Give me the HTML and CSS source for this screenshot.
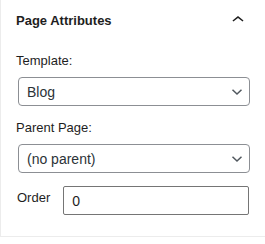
FILE: index.html
```html
<!DOCTYPE html>
<html lang="en">
<head>
	<meta charset="UTF-8">
	<title>Page Attributes</title>
	<link rel="stylesheet" href="styles.css">
</head>
<body>
	<div class="panel">
		<div class="panel-header">
			<h2 class="panel-title">Page Attributes</h2>
			<svg class="panel-toggle" width="24" height="24" viewBox="0 0 24 24" aria-hidden="true">
				<path d="M6.5 12.4L12 8l5.5 4.4-.9 1.2L12 10l-4.6 3.6-1-1.2z"></path>
			</svg>
		</div>
		<div class="field">
			<label class="field-label" for="template">Template:</label>
			<div class="select-wrap">
				<select id="template" class="field-select">
					<option>Blog</option>
				</select>
				<svg class="select-arrow" width="12" height="8" viewBox="0 0 12 8" aria-hidden="true">
					<path d="M1.5 1.8L6 6l4.5-4.2"></path>
				</svg>
			</div>
		</div>
		<div class="field field-parent">
			<label class="field-label" for="parent">Parent Page:</label>
			<div class="select-wrap">
				<select id="parent" class="field-select">
					<option>(no parent)</option>
				</select>
				<svg class="select-arrow" width="12" height="8" viewBox="0 0 12 8" aria-hidden="true">
					<path d="M1.5 1.8L6 6l4.5-4.2"></path>
				</svg>
			</div>
		</div>
		<div class="field field-inline">
			<label class="field-label" for="order">Order</label>
			<input id="order" class="field-input" type="text" value="0">
		</div>
	</div>
</body>
</html>
```

FILE: styles.css
```css
html,
body {
	margin: 0;
	padding: 0;
	background: #fff;
}
body {
	font-family: "Liberation Sans", Arial, sans-serif;
	font-size: 13px;
	color: #1e1e1e;
}
.panel {
	width: 265px;
	box-sizing: border-box;
	border-left: 1px solid #ececec;
	border-bottom: 1px solid #ececec;
	padding: 9px 15px 21px 15px;
}
.panel-header {
	display: flex;
	align-items: center;
	justify-content: space-between;
	height: 24px;
}
.panel-title {
	margin: 0;
	font-size: 13px;
	font-weight: bold;
	line-height: 16px;
	color: #1e1e1e;
}
.panel-toggle {
	display: block;
	margin-top: -2px;
	fill: #1e1e1e;
}
.field {
	margin-top: 20px;
}
.field-parent {
	margin-top: 14px;
}
.field-label {
	display: block;
	line-height: 16px;
	margin-bottom: 8px;
}
.select-wrap {
	position: relative;
	margin-left: 2px;
}
.field-select {
	display: block;
	width: 100%;
	height: 29px;
	box-sizing: border-box;
	margin: 0;
	padding: 0 24px 0 8px;
	border: 1px solid #8c8f94;
	border-radius: 4px;
	background: #fff;
	font-family: inherit;
	font-size: 14px;
	color: #2c3338;
	-webkit-appearance: none;
	appearance: none;
}
.select-arrow {
	position: absolute;
	right: 7px;
	top: 11px;
	fill: none;
	stroke: #50575e;
	stroke-width: 1.5;
}
.field-inline {
	display: flex;
	align-items: flex-start;
	gap: 13px;
	margin-top: 13px;
}
.field-inline .field-label {
	margin: 0;
	padding-top: 4px;
	padding-left: 1px;
}
.field-input {
	flex: 1;
	min-width: 0;
	height: 29px;
	box-sizing: border-box;
	margin: 0 1px 0 0;
	padding: 0 8px;
	border: 1px solid #757575;
	border-radius: 2px;
	font-family: inherit;
	font-size: 14px;
	color: #1e1e1e;
}
```
